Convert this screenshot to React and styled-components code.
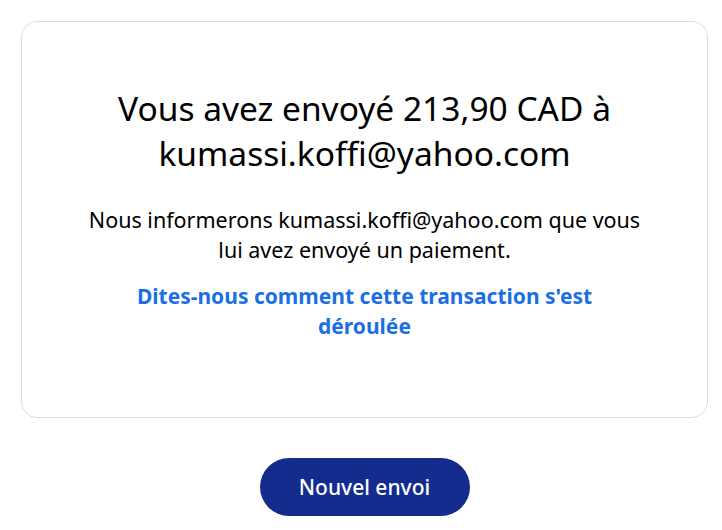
import styled, { createGlobalStyle } from 'styled-components'

const GlobalStyle = createGlobalStyle`
  body {
    margin: 0;
    background: #fff;
    font-family: 'Noto Sans', 'Liberation Sans', sans-serif;
    color: #001435;
  }
`

const Page = styled.div`
  display: flex;
  flex-direction: column;
  align-items: center;
  padding: 21px 14px 0 21px;
`

const Card = styled.section`
  box-sizing: border-box;
  width: 100%;
  height: 397px;
  border: 1px solid #dcdcd8;
  border-radius: 16px;
  padding: 64px 40px 0;
  display: flex;
  flex-direction: column;
  align-items: center;
  text-align: center;
`

const Heading = styled.h1`
  margin: 0;
  font-size: 33.5px;
  font-weight: 400;
  line-height: 45px;
  color: #000;
  max-width: 540px;
`

const Message = styled.p`
  margin: 29px 0 0;
  font-size: 21.5px;
  line-height: 30px;
  color: #000;
  max-width: 570px;
`

const FeedbackLink = styled.a`
  margin-top: 16px;
  font-size: 21px;
  font-weight: 700;
  line-height: 30px;
  color: #1b6fe4;
  text-decoration: none;
  max-width: 480px;
  cursor: pointer;
`

const PrimaryButton = styled.button`
  margin-top: 40px;
  width: 210px;
  height: 58px;
  border: none;
  border-radius: 29px;
  background: #142c8e;
  color: #fff;
  font-family: inherit;
  font-size: 21px;
  font-weight: 500;
  cursor: pointer;
`

const App = () => {
  return (
    <>
      <GlobalStyle />
      <Page>
        <Card>
          <Heading>Vous avez envoyé 213,90 CAD à kumassi.koffi@yahoo.com</Heading>
          <Message>
            Nous informerons kumassi.koffi@yahoo.com que vous lui avez envoyé un paiement.
          </Message>
          <FeedbackLink>Dites-nous comment cette transaction s'est déroulée</FeedbackLink>
        </Card>
        <PrimaryButton>Nouvel envoi</PrimaryButton>
      </Page>
    </>
  )
}

export default App
